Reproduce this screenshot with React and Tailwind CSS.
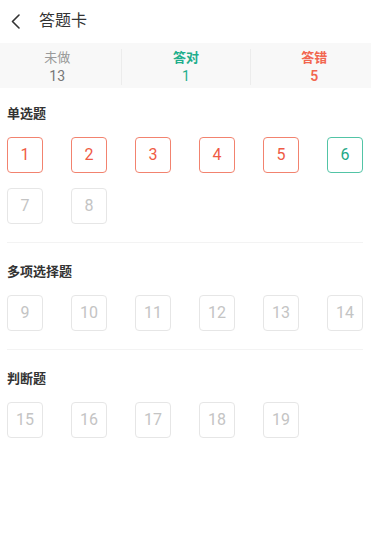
import React from "react";

function Box({ n, state }) {
  const cls =
    state === "wrong"
      ? "border-[#f2836f] text-[#ef5b45]"
      : state === "right"
      ? "border-[#52c4a6] text-[#1ea887]"
      : "border-[#e6e6e6] text-[#c4c4c4]";
  return (
    <div
      className={`w-[36px] h-[36px] rounded-[4px] border-[1.5px] flex items-center justify-center text-[16px] ${cls}`}
    >
      {n}
    </div>
  );
}

function Section({ title, items, first }) {
  return (
    <div className={`${first ? "pt-[16px]" : "pt-[19px] border-t border-[#f3f3f3]"} pb-[18px]`}>
      <div className="text-[13px] leading-[20px] font-semibold text-[#333]">{title}</div>
      <div className="mt-[13px] grid grid-cols-[repeat(6,36px)] gap-x-[28px] gap-y-[15px]">
        {items.map(([n, s]) => (
          <Box key={n} n={n} state={s} />
        ))}
      </div>
    </div>
  );
}

export default function App() {
  return (
    <div
      className="w-[371px] min-h-[545px] bg-white overflow-hidden"
      style={{ fontFamily: 'Roboto, "Noto Sans CJK SC", sans-serif' }}
    >
      <div className="h-[43px] flex items-center">
        <svg className="ml-[11px]" width="9" height="15" viewBox="0 0 9 15" fill="none">
          <path d="M8 1L1.5 7.5L8 14" stroke="#333" strokeWidth="1.6" strokeLinecap="round" strokeLinejoin="round" />
        </svg>
        <div className="ml-[19px] text-[16px] text-[#333] leading-[22px] -mt-[1px]">答题卡</div>
      </div>
      <div className="h-[45px] bg-[#f8f8f8] overflow-hidden">
        <div className="-mx-[7px] grid grid-cols-3 h-full items-center pt-[2px]">
          <div className="h-[36px] flex flex-col justify-center items-center leading-[19px] text-[13px]">
            <span className="text-[#9a9a9a]">未做</span>
            <span className="text-[#777] text-[14px]">13</span>
          </div>
          <div className="h-[36px] flex flex-col justify-center items-center leading-[19px] text-[13px] border-l border-[#ececec] font-semibold text-[#1fae8c]">
            <span>答对</span>
            <span className="font-normal text-[14px]">1</span>
          </div>
          <div className="h-[36px] flex flex-col justify-center items-center leading-[19px] text-[13px] border-l border-[#ececec] font-semibold text-[#f2664f]">
            <span>答错</span>
            <span className="text-[14px]">5</span>
          </div>
        </div>
      </div>
      <div className="pl-[7px] pr-[8px]">
        <Section
          first
          title="单选题"
          items={[
            [1, "wrong"],
            [2, "wrong"],
            [3, "wrong"],
            [4, "wrong"],
            [5, "wrong"],
            [6, "right"],
            [7, ""],
            [8, ""],
          ]}
        />
        <Section title="多项选择题" items={[9, 10, 11, 12, 13, 14].map((n) => [n, ""])} />
        <Section title="判断题" items={[15, 16, 17, 18, 19].map((n) => [n, ""])} />
      </div>
    </div>
  );
}
